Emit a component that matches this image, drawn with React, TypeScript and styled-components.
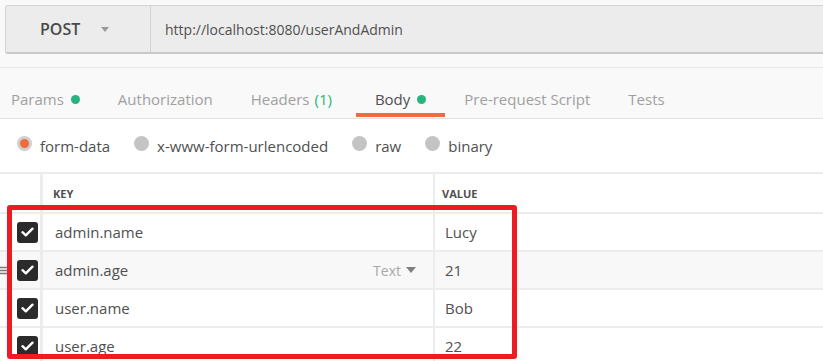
import React from "react";
import styled, { createGlobalStyle } from "styled-components";

const GlobalStyle = createGlobalStyle`
  body {
    margin: 0;
    background: #ffffff;
    font-family: "Open Sans", "Noto Sans", sans-serif;
    color: #505050;
    overflow: hidden;
  }
`;

const tabs = [
  { label: "Params", dot: true },
  { label: "Authorization" },
  { label: "Headers", count: "(1)" },
  { label: "Body", dot: true, active: true },
  { label: "Pre-request Script" },
  { label: "Tests" },
];

const bodyModes = [
  { label: "form-data", selected: true },
  { label: "x-www-form-urlencoded" },
  { label: "raw" },
  { label: "binary" },
];

const rows = [
  { key: "admin.name", value: "Lucy" },
  { key: "admin.age", value: "21", hovered: true },
  { key: "user.name", value: "Bob" },
  { key: "user.age", value: "22" },
];

const CheckIcon = () => (
  <svg width="13" height="10" viewBox="0 0 13 10">
    <path
      d="M1.5 5.2 L4.8 8.3 L11.5 1.7"
      fill="none"
      stroke="#fff"
      strokeWidth="2.4"
      strokeLinecap="round"
      strokeLinejoin="round"
    />
  </svg>
);

const HandleIcon = () => (
  <svg width="9" height="9" viewBox="0 0 9 9">
    <path d="M0 1.5 H9 M0 4.5 H9 M0 7.5 H9" stroke="#7a7a7a" strokeWidth="1.3" />
  </svg>
);

const App = () => {
  return (
    <Root>
      <GlobalStyle />
      <TopArea>
        <UrlBar>
          <Method>
            POST
            <Caret />
          </Method>
          <UrlText>http://localhost:8080/userAndAdmin</UrlText>
        </UrlBar>
      </TopArea>
      <TabBar>
        {tabs.map(t => (
          <Tab key={t.label} active={!!t.active} wide={!!t.count}>
            {t.label}
            {t.count && <Count>{t.count}</Count>}
            {t.dot && <Dot />}
          </Tab>
        ))}
      </TabBar>
      <ModeRow>
        {bodyModes.map(m => (
          <Mode key={m.label}>
            <Radio selected={!!m.selected} />
            {m.label}
          </Mode>
        ))}
      </ModeRow>
      <Table>
        <HeaderRow>
          <CheckCell />
          <KeyHead>KEY</KeyHead>
          <ValueHead>VALUE</ValueHead>
        </HeaderRow>
        {rows.map(r => (
          <Row key={r.key} hovered={!!r.hovered}>
            <CheckCell>
              <Handle visible={!!r.hovered}>
                <HandleIcon />
              </Handle>
              <Checkbox>
                <CheckIcon />
              </Checkbox>
            </CheckCell>
            <KeyCell>
              {r.key}
              {r.hovered && (
                <TypeSelect>
                  Text
                  <SmallCaret />
                </TypeSelect>
              )}
            </KeyCell>
            <ValueCell>{r.value}</ValueCell>
          </Row>
        ))}
      </Table>
      <Highlight />
    </Root>
  );
};

export default App;

const Root = styled.div`
  position: relative;
  width: 823px;
  height: 361px;
  overflow: hidden;
`;

const TopArea = styled.div`
  height: 68px;
  box-sizing: border-box;
  padding: 5px 0 0 5px;
  background: #f9f9f9;
  border-bottom: 1px solid #e6e6e6;
  display: flex;
  align-items: flex-start;
`;

const UrlBar = styled.div`
  flex: 1;
  margin-right: -6px;
  height: 49px;
  box-sizing: border-box;
  display: flex;
  background: #ececec;
  border: 1px solid #d4d4d4;
  border-bottom: 2px solid #c9c9c9;
  border-radius: 3px 0 0 3px;
`;

const Method = styled.div`
  width: 145px;
  box-sizing: border-box;
  padding-left: 34px;
  border-right: 1px solid #d4d4d4;
  display: flex;
  align-items: center;
  font-size: 16px;
  font-weight: 600;
  color: #4a4a4a;
`;

const Caret = styled.span`
  margin-left: 21px;
  width: 0;
  height: 0;
  border-left: 4px solid transparent;
  border-right: 4px solid transparent;
  border-top: 5px solid #9a9a9a;
`;

const UrlText = styled.div`
  display: flex;
  align-items: center;
  padding-left: 14px;
  font-size: 14px;
  color: #505050;
`;

const TabBar = styled.div`
  height: 51px;
  box-sizing: border-box;
  background: #f9f9f9;
  border-bottom: 1px solid #e2e2e2;
  display: flex;
  align-items: flex-start;
  margin-left: -8px;
`;

const Tab = styled.div<{ active: boolean; wide: boolean }>`
  height: 49px;
  box-sizing: border-box;
  padding: 17px ${props => (props.wide ? "24px" : "19px")} 0 19px;
  border-bottom: 4px solid ${props => (props.active ? "#f26b3a" : "transparent")};
  display: flex;
  align-items: center;
  font-size: 15px;
  color: ${props => (props.active ? "#505050" : "#a0a0a0")};
  white-space: nowrap;
`;

const Count = styled.span`
  margin-left: 5px;
  color: #26b47f;
`;

const Dot = styled.span`
  margin-left: 7px;
  width: 9px;
  height: 9px;
  border-radius: 50%;
  background: #26b47f;
`;

const ModeRow = styled.div`
  height: 53px;
  box-sizing: border-box;
  display: flex;
  align-items: center;
  gap: 24px;
  padding-left: 17px;
`;

const Mode = styled.div`
  display: flex;
  align-items: center;
  font-size: 15px;
  color: #505050;
`;

const Radio = styled.span<{ selected: boolean }>`
  width: 15px;
  height: 15px;
  box-sizing: border-box;
  border-radius: 50%;
  margin-right: 8px;
  margin-bottom: 4px;
  background: ${props => (props.selected ? "#f26b3a" : "#c4c4c4")};
  border: ${props => (props.selected ? "3px solid #cfcfcf" : "none")};
`;

const Table = styled.div`
  border-top: 2px solid #ececec;
`;

const HeaderRow = styled.div`
  height: 40px;
  box-sizing: border-box;
  border-bottom: 2px solid #ececec;
  display: flex;
`;

const Row = styled.div<{ hovered: boolean }>`
  height: 38px;
  box-sizing: border-box;
  border-bottom: 2px solid #ececec;
  background: ${props => (props.hovered ? "#f8f8f8" : "#ffffff")};
  display: flex;
`;

const CheckCell = styled.div`
  width: 43px;
  box-sizing: border-box;
  border-right: 3px solid #ececec;
  display: flex;
  align-items: center;
`;

const Handle = styled.span<{ visible: boolean }>`
  width: 9px;
  margin-right: 8px;
  display: flex;
  visibility: ${props => (props.visible ? "visible" : "hidden")};
`;

const Checkbox = styled.span`
  width: 21px;
  height: 21px;
  border-radius: 3px;
  background: #2b2b2b;
  display: flex;
  align-items: center;
  justify-content: center;
`;

const KeyHead = styled.div`
  width: 392px;
  box-sizing: border-box;
  padding-left: 10px;
  border-right: 2px solid #ececec;
  display: flex;
  align-items: center;
  font-size: 11px;
  font-weight: 700;
  color: #505050;
`;

const ValueHead = styled.div`
  flex: 1;
  padding-left: 7px;
  display: flex;
  align-items: center;
  font-size: 11px;
  font-weight: 700;
  color: #505050;
`;

const KeyCell = styled.div`
  width: 392px;
  box-sizing: border-box;
  padding: 0 17px 0 12px;
  border-right: 2px solid #ececec;
  display: flex;
  align-items: center;
  font-size: 15px;
  color: #505050;
`;

const TypeSelect = styled.span`
  margin-left: auto;
  display: flex;
  align-items: center;
  font-size: 14px;
  color: #a8a8a8;
`;

const SmallCaret = styled.span`
  margin-left: 5px;
  width: 0;
  height: 0;
  border-left: 5px solid transparent;
  border-right: 5px solid transparent;
  border-top: 6px solid #808080;
`;

const ValueCell = styled.div`
  flex: 1;
  padding-left: 10px;
  display: flex;
  align-items: center;
  font-size: 15px;
  color: #505050;
`;

const Highlight = styled.div`
  position: absolute;
  left: 7px;
  top: 205px;
  width: 510px;
  height: 154px;
  box-sizing: border-box;
  border: 5px solid #ed1c24;
  border-radius: 3px;
  pointer-events: none;
`;
